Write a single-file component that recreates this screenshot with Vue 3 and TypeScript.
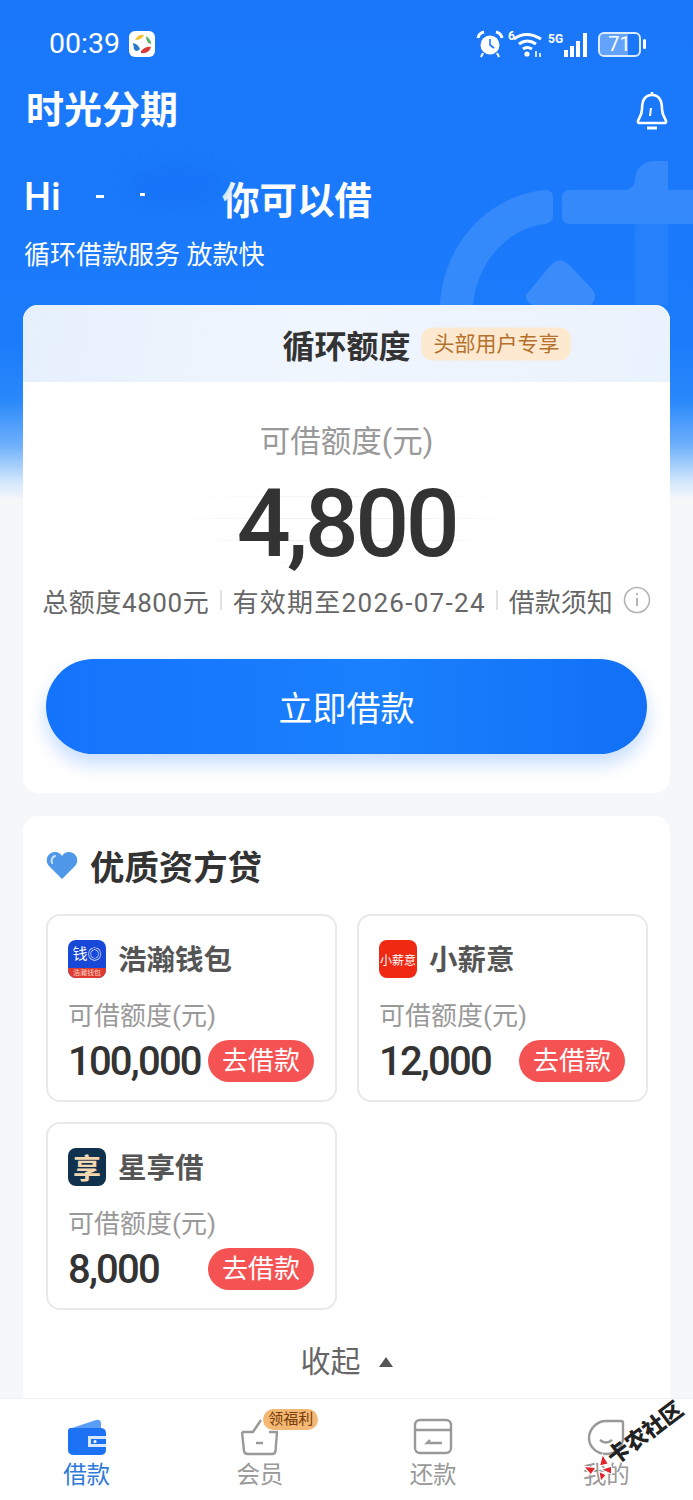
<template>
  <div class="page">
    <svg class="hero-deco" width="260" height="155" viewBox="0 0 260 155">
      <path d="M7 155 C10 95 55 45 112 40 Q120 40 120 48 V65 Q120 73 112 74 C75 78 44 112 40 155 Z" fill="#fff" fill-opacity=".12" />
      <path d="M137 40 H190 Q202 40 202 28 Q204 13 220 11 H235 V40 H260 V74 H137 Q129 74 129 66 V48 Q129 40 137 40 Z" fill="#fff" fill-opacity=".12" />
      <rect x="202" y="74" width="33" height="81" fill="#fff" fill-opacity=".05" />
      <path d="M93 145 L118 115 Q127 106 136 115 L160 140 Q165 148 158 155 H100 Q92 152 93 145 Z" fill="#fff" fill-opacity=".14" />
    </svg>

    <div class="top">
      <div class="status">
        <div class="status-left">
          <span class="time">00:39</span>
          <svg width="26" height="26" viewBox="0 0 26 26">
            <rect width="26" height="26" rx="6" fill="#fff" />
            <path d="M6 9 Q9 3 15 4 Q13 9 6 9 Z" fill="#f2c230" />
            <path d="M4 12 Q9 13 11 18 Q7 22 5 18 Z" fill="#2c79c9" />
            <path d="M12 20 Q17 15 22 16 Q20 23 12 22 Z" fill="#d93a3a" />
            <path d="M17 5 Q22 8 22 13 Q17 12 17 5 Z" fill="#55b36a" />
          </svg>
        </div>
        <div class="status-right">
          <svg width="28" height="28" viewBox="0 0 28 28" fill="none" stroke="#fff">
            <circle cx="14" cy="15" r="9.5" fill="#fff" stroke="none" />
            <path d="M14 9 V15 L18 18" stroke="#1a77fa" stroke-width="1.6" />
            <path d="M2 8 Q3 3 8 2 M20 2 Q25 3 26 8" stroke-width="3" />
            <path d="M7 23 L5 27 M21 23 L23 27" stroke-width="2" />
          </svg>
          <svg width="36" height="28" viewBox="0 0 36 28" fill="none" stroke="#fff" stroke-width="3">
            <path d="M6 9 Q18 0 33 9" />
            <path d="M11 14 Q19 8 28 14" />
            <path d="M15 19 Q19 16 24 19" />
            <circle cx="19" cy="24" r="2.6" fill="#fff" stroke="none" />
            <path d="M28 21 V27 M32 23 V27" stroke-width="1.6" />
            <text x="0" y="10" class="mini-text" fill="#fff" stroke="none">6</text>
          </svg>
          <svg width="42" height="28" viewBox="0 0 42 28" fill="#fff">
            <text x="0" y="13" class="mini-text">5G</text>
            <rect x="16" y="20" width="4" height="7" />
            <rect x="22" y="16" width="4" height="11" />
            <rect x="28" y="11" width="4" height="16" />
            <rect x="35" y="3" width="4" height="24" />
          </svg>
          <div class="battery">
            <div class="battery-body">
              <div class="battery-fill"></div>
              <span class="battery-num">71</span>
            </div>
            <i class="battery-cap"></i>
          </div>
        </div>
      </div>

      <div class="header">
        <span class="brand">时光分期</span>
        <svg class="bell" width="34" height="40" viewBox="0 0 34 40" fill="none" stroke="#fff" stroke-width="2.6">
          <path d="M17 5 C9 5 7 12 7 19 C7 25 4 28 3 31 Q2.5 33 5 33 H29 Q31.5 33 31 31 C30 28 27 25 27 19 C27 12 25 5 17 5 Z" />
          <path d="M17 2 V5" />
          <path d="M16 18 L15 26" stroke-width="2" />
          <path d="M12 38 H22" stroke-width="3" />
        </svg>
      </div>

      <div class="hero">
        <div class="hero-line">
          <span class="hi">Hi</span>
          <span class="name"><i class="dash"></i><i class="dot"></i></span>
          <span class="can">你可以借</span>
        </div>
        <div class="hero-sub">循环借款服务 放款快</div>
      </div>
    </div>

    <div class="main">
      <section class="card quota">
        <div class="quota-head">
          <div class="quota-title-wrap">
            <h2 class="quota-title">循环额度</h2>
            <span class="quota-tag">头部用户专享</span>
          </div>
        </div>
        <div class="quota-body">
          <div class="quota-label">可借额度(元)</div>
          <div class="quota-amount">4,800</div>
          <div class="quota-info">
            <span class="total">总额度4800元</span>
            <i class="sep"></i>
            <span class="date">有效期至2026-07-24</span>
            <i class="sep"></i>
            <span>借款须知</span>
            <svg class="info-icon" width="28" height="28" viewBox="0 0 28 28" fill="none" stroke="#b5b5b5" stroke-width="1.6">
              <circle cx="14" cy="14" r="12.5" />
              <path d="M14 12 V20" stroke-width="2" />
              <circle cx="14" cy="8" r="1.2" fill="#b5b5b5" stroke="none" />
            </svg>
          </div>
          <button class="borrow">立即借款</button>
        </div>
      </section>

      <section class="card lenders">
        <div class="lenders-head">
          <svg width="32" height="28" viewBox="0 0 32 28">
            <path d="M16 28 L3 15 C-2 9 2 1 9 1 C12 1 14.5 2.5 16 5 C17.5 2.5 20 1 23 1 C30 1 34 9 29 15 Z" fill="#4f97e8" />
            <path d="M9 5 C6 6 5 9 6 12" fill="none" stroke="#cfe4fa" stroke-width="2" stroke-linecap="round" />
          </svg>
          <h3>优质资方贷</h3>
        </div>
        <div class="lender-grid">
          <div v-for="item in lenders" :key="item.name" class="lender">
            <div class="lender-top">
              <div class="logo" :class="item.logo">
                <template v-if="item.logo === 'logo-qb'">
                  <div class="qb-main">钱<b>◎</b></div>
                  <div class="qb-foot">浩瀚钱包</div>
                </template>
                <template v-else>{{ item.logoText }}</template>
              </div>
              <span class="lender-name">{{ item.name }}</span>
            </div>
            <div class="lender-label">可借额度(元)</div>
            <div class="lender-row">
              <span class="lender-amount">{{ item.amount }}</span>
              <span class="go">去借款</span>
            </div>
          </div>
        </div>
        <div class="collapse">
          <span>收起</span>
          <i class="arrow"></i>
        </div>
      </section>
    </div>

    <nav class="tabbar">
      <div class="tab active">
        <svg width="42" height="38" viewBox="0 0 42 38">
          <path d="M6 10 L30 2 Q35 1 35 6 V10 Z" fill="#5a9df5" />
          <path d="M5 10 H34 Q40 10 40 15 V32 Q40 37 34 37 H8 Q2 37 2 32 V13 Q2 10 5 10 Z" fill="#1c72f2" />
          <path d="M22 18 H40 V29 H22 Z" fill="#d9e8fd" />
          <path d="M25 21 H40 V26 H25 Z" fill="#1c72f2" />
          <circle cx="29" cy="23.5" r="1.6" fill="#fff" />
        </svg>
        <span>借款</span>
      </div>
      <div class="tab">
        <span class="welfare">领福利</span>
        <svg width="42" height="38" viewBox="0 0 42 38" fill="none" stroke="#999" stroke-width="2.4" stroke-linejoin="round">
          <path d="M3 14 L14 14 L22 2" />
          <path d="M3 14 L5 33 Q5.5 36 9 36 H33 Q36 36 36.5 33 L38 14 H30" />
          <path d="M17 25 H24" />
        </svg>
        <span>会员</span>
      </div>
      <div class="tab">
        <svg width="42" height="38" viewBox="0 0 42 38" fill="none" stroke="#999" stroke-width="2.4">
          <rect x="3" y="2" width="36" height="33" rx="5" />
          <path d="M3 12 H39" />
          <path d="M18 22 L15 25 H30" />
        </svg>
        <span>还款</span>
      </div>
      <div class="tab">
        <svg width="42" height="38" viewBox="0 0 42 38" fill="none" stroke="#999" stroke-width="2.4">
          <path d="M21 3 H36 Q38 3 38 5 V20 C38 29 30 36 21 36 C12 36 4 29 4 20 C4 11 12 3 21 3 Z" />
          <path d="M15 22 Q21 27 27 22" />
        </svg>
        <span>我的</span>
      </div>
    </nav>

    <div class="watermark">
      <svg width="28" height="28" viewBox="0 0 30 30">
        <path d="M3 3 L13 12 L4 15 Z M27 5 L17 13 L26 17 Z M8 27 L13 17 L17 25 Z M22 28 L16 17 L27 21 Z" fill="#e0242a" stroke="#fff" stroke-width="1.2" />
      </svg>
      <span>卡农社区</span>
    </div>
  </div>
</template>

<script setup lang="ts">
interface Lender {
  name: string
  amount: string
  logo: string
  logoText: string
}

const lenders: Lender[] = [
  { name: '浩瀚钱包', amount: '100,000', logo: 'logo-qb', logoText: '' },
  { name: '小薪意', amount: '12,000', logo: 'logo-xxy', logoText: '小薪意' },
  { name: '星享借', amount: '8,000', logo: 'logo-xxj', logoText: '享' },
]
</script>

<style>
html,
body {
  margin: 0;
  background: #f6f7f9;
}
</style>

<style scoped>
.page {
  position: relative;
  display: flex;
  flex-direction: column;
  width: 693px;
  height: 1500px;
  overflow: hidden;
  font-family: Roboto, "Noto Sans CJK SC", sans-serif;
  background: linear-gradient(180deg, #1a77fa 0, #1a7bfb 340px, #2a88fb 400px, #6db0fb 445px, #d3e7fb 482px, #f6f7f9 500px);
}

.hero-deco {
  position: absolute;
  top: 150px;
  right: 0;
}

.top {
  position: relative;
  height: 305px;
  flex-shrink: 0;
  color: #fff;
}

.status {
  display: flex;
  justify-content: space-between;
  align-items: center;
  height: 28px;
  padding: 30px 47px 0 49px;
}

.status-left {
  display: flex;
  align-items: center;
  gap: 9px;
}

.time {
  font-size: 28.5px;
  line-height: 28px;
}

.status-right {
  display: flex;
  align-items: center;
  gap: 4px;
}

.mini-text {
  font-family: Roboto, sans-serif;
  font-size: 12px;
  font-weight: 700;
}

.battery {
  display: flex;
  align-items: center;
  gap: 2px;
  margin-left: 4px;
}

.battery-body {
  position: relative;
  width: 39px;
  height: 21px;
  border: 2px solid rgba(255, 255, 255, 0.85);
  border-radius: 6px;
  overflow: hidden;
}

.battery-fill {
  width: 71%;
  height: 100%;
  background: rgba(255, 255, 255, 0.32);
}

.battery-num {
  position: absolute;
  inset: 0;
  text-align: center;
  font-size: 20px;
  line-height: 21px;
}

.battery-cap {
  width: 3px;
  height: 10px;
  border-radius: 2px;
  background: #fff;
}

.header {
  display: flex;
  justify-content: space-between;
  align-items: center;
  height: 44px;
  padding: 30px 24px 0 26px;
}

.brand {
  font-size: 38px;
  line-height: 44px;
  font-weight: 700;
}

.hero {
  padding: 42px 0 0 24px;
}

.hero-line {
  display: flex;
  align-items: center;
  height: 46px;
}

.hi {
  width: 72px;
  font-size: 38px;
  font-weight: 500;
}

.name {
  position: relative;
  display: block;
  width: 126px;
  height: 46px;
}

.name::before {
  content: "";
  position: absolute;
  left: 30px;
  top: -10px;
  width: 100px;
  height: 44px;
  border-radius: 50%;
  background: #1670f5;
  opacity: 0.6;
  filter: blur(10px);
}

.dash,
.dot {
  position: absolute;
  top: 21px;
  height: 3px;
  background: #fff;
}

.dash {
  left: 0;
  width: 8px;
}

.dot {
  left: 44px;
  top: 19px;
  width: 5px;
}

.can {
  font-size: 37.5px;
  font-weight: 700;
}

.hero-sub {
  margin-top: 16px;
  font-size: 26px;
  line-height: 38px;
}

.main {
  position: relative;
  flex: 1;
  min-height: 0;
  display: flex;
  flex-direction: column;
  gap: 23px;
  padding: 0 23px;
  overflow: hidden;
}

.card {
  flex-shrink: 0;
  background: #fff;
  border-radius: 15px;
  overflow: hidden;
}

.quota {
  height: 488px;
}

.quota-head {
  display: flex;
  align-items: center;
  justify-content: center;
  height: 77px;
  background: linear-gradient(100deg, #e6f0fc, #f0f6fe 45%, #eaf2fd);
}

.quota-title-wrap {
  position: relative;
}

.quota-title {
  margin: 0;
  font-size: 32px;
  font-weight: 700;
  color: #333;
}

.quota-tag {
  position: absolute;
  left: calc(100% + 10px);
  top: 50%;
  transform: translateY(-50%);
  padding: 0 11px 0 13px;
  font-size: 21px;
  line-height: 33px;
  color: #b5702c;
  background: #fde8d0;
  border-radius: 12px;
  white-space: nowrap;
}

.quota-body {
  display: flex;
  flex-direction: column;
  align-items: center;
  padding: 38px 23px 0;
}

.quota-label {
  font-size: 30.5px;
  line-height: 44px;
  color: #999;
}

.quota-amount {
  position: relative;
  margin-top: 10px;
  font-size: 95px;
  font-weight: 500;
  line-height: 100px;
  letter-spacing: -3.5px;
  color: #333;
}

/* faint stripes behind the amount */
.quota-amount::before {
  content: "";
  position: absolute;
  inset: 0 -70px;
  z-index: -1;
  background: repeating-linear-gradient(180deg, #f1f1f1 0 1px, transparent 1px 22px);
  -webkit-mask-image: radial-gradient(closest-side, #000 40%, transparent);
  mask-image: radial-gradient(closest-side, #000 40%, transparent);
}

.quota-body {
  position: relative;
  z-index: 0;
}

.quota-info {
  display: flex;
  align-items: center;
  height: 30px;
  margin-top: 11px;
  font-size: 26px;
  color: #666;
  white-space: nowrap;
}

.total {
  letter-spacing: 0.6px;
}

.date {
  letter-spacing: 1.3px;
}

.sep {
  width: 2px;
  height: 20px;
  margin: 0 10.5px;
  background: #e2e2e2;
}

.info-icon {
  margin-left: 10px;
}

.borrow {
  width: 601px;
  height: 95px;
  margin-top: 44px;
  border: none;
  border-radius: 48px;
  font-family: inherit;
  font-size: 34px;
  color: #fff;
  background: linear-gradient(90deg, #1473fb, #1a80fd 55%, #1170f5);
  box-shadow: 0 10px 18px rgba(30, 120, 250, 0.25);
}

.lenders {
  padding: 0 23px;
  height: 640px;
}

.lenders-head {
  display: flex;
  align-items: center;
  gap: 12px;
  height: 98px;
}

.lenders-head h3 {
  margin: 0;
  font-size: 34.4px;
  font-weight: 700;
  color: #333;
}

.lender-grid {
  display: grid;
  grid-template-columns: 291px 291px;
  gap: 20px;
}

.lender {
  box-sizing: border-box;
  height: 188px;
  padding: 24px 21px 0 20px;
  border: 2px solid #e9e9e9;
  border-radius: 14px;
}

.lender-top {
  display: flex;
  align-items: center;
  gap: 12px;
  height: 38px;
}

.logo {
  display: flex;
  flex-direction: column;
  align-items: center;
  justify-content: center;
  width: 38px;
  height: 38px;
  border-radius: 8px;
  overflow: hidden;
  flex-shrink: 0;
}

.logo-qb {
  background: #1748d8;
}

.qb-main {
  flex: 1;
  display: flex;
  align-items: center;
  font-size: 15px;
  line-height: 1;
  color: #fff;
}

.qb-main b {
  font-weight: 400;
  font-size: 14px;
}

.qb-foot {
  width: 100%;
  height: 10px;
  font-size: 7px;
  line-height: 10px;
  text-align: center;
  color: #f8d0c0;
  background: #df3a30;
}

.logo-xxy {
  font-size: 12px;
  color: #fff;
  background: #f02a12;
  white-space: nowrap;
}

.logo-xxj {
  font-size: 28px;
  font-weight: 700;
  color: #f4d7b0;
  background: #10324f;
}

.lender-name {
  font-size: 28.5px;
  font-weight: 700;
  color: #555;
  margin-top: -3px;
}

.lender-label {
  margin-top: 20px;
  font-size: 26px;
  line-height: 36px;
  color: #999;
}

.lender-row {
  display: flex;
  justify-content: space-between;
  align-items: center;
  height: 44px;
  margin-top: 5px;
}

.lender-amount {
  font-size: 40px;
  font-weight: 500;
  letter-spacing: -1.8px;
  color: #333;
}

.go {
  width: 106px;
  font-size: 26px;
  line-height: 42px;
  text-align: center;
  color: #fff;
  background: #f55353;
  border-radius: 21px;
}

.collapse {
  display: flex;
  align-items: center;
  justify-content: center;
  gap: 18px;
  margin-top: 30px;
  font-size: 30px;
  line-height: 44px;
  color: #666;
}

.arrow {
  width: 0;
  height: 0;
  border-left: 7px solid transparent;
  border-right: 7px solid transparent;
  border-bottom: 10px solid #555;
}

.tabbar {
  position: relative;
  flex-shrink: 0;
  display: grid;
  grid-template-columns: repeat(4, 173.25px);
  height: 102px;
  box-sizing: border-box;
  border-top: 1px solid #eef0f3;
  background: #fff;
}

.tab {
  position: relative;
  display: flex;
  flex-direction: column;
  align-items: center;
  padding-top: 19px;
  font-size: 23.5px;
  line-height: 30px;
  color: #999;
}

.tab span:last-child {
  margin-top: 4px;
}

.tab.active {
  color: #2f7ad9;
}

.tab .welfare {
  position: absolute;
  top: 10px;
  left: 90px;
  padding: 0 5px;
  font-size: 15px;
  line-height: 21px;
  color: #7a3d0a;
  background: #f3b874;
  border-radius: 11px;
  white-space: nowrap;
  z-index: 1;
}

.watermark {
  position: absolute;
  left: 588px;
  top: 1462px;
  display: flex;
  align-items: center;
  transform: rotate(-37deg);
  transform-origin: left center;
  font-size: 22px;
  font-weight: 900;
  line-height: 30px;
  color: #222;
  white-space: nowrap;
}
</style>
